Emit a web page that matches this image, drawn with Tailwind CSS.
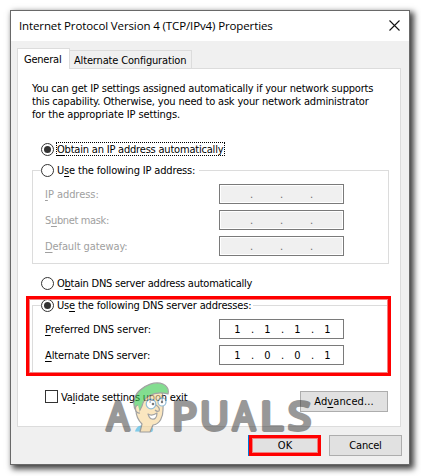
<!DOCTYPE html>
<html lang="en">
<head>
<meta charset="utf-8">
<title>Internet Protocol Version 4 (TCP/IPv4) Properties</title>
<script src="https://cdn.jsdelivr.net/npm/@tailwindcss/browser@4"></script>
</head>
<body class="bg-white w-[421px] h-[476px] overflow-hidden relative pl-[10px] pt-[10px] text-black text-[11px] leading-[13px] whitespace-nowrap font-['DejaVu_Sans_Condensed','DejaVu_Sans',sans-serif]">
<div class="w-[400px] h-[455px] border border-[#696969] bg-[#f0f0f0] flex flex-col shadow-[3px_3px_6px_1px_rgba(0,0,0,0.75)]">
  <header class="h-[30px] shrink-0 bg-white flex items-center justify-between pl-[8px] pr-[9px]">
    <h1 class="font-['Open_Sans',sans-serif] text-[11.5px] leading-[16px] tracking-[-0.12px]">Internet Protocol Version 4 (TCP/IPv4) Properties</h1>
    <svg class="w-[11px] h-[11px] mt-[-2px]" viewBox="0 0 11 11" fill="none" stroke="#111" stroke-width="1.1"><path d="M.5.5l10 10M10.500.5l-10 10"/></svg>
  </header>

  <nav class="h-[27px] shrink-0 flex items-end pl-[6px] mt-0">
    <div class="w-[53px] h-[21px] mb-[-1px] z-10 relative bg-white border border-b-0 border-[#dcdcdc] pl-[6px] pt-[4px] tracking-[-0.22px]">General</div>
    <div class="w-[122px] h-[18px] bg-[#f0f0f0] border border-l-0 border-b-0 border-[#dcdcdc] pl-[4px] pt-[3px] tracking-[-0.16px]">Alternate Configuration</div>
  </nav>

  <main class="ml-[6px] w-[384px] h-[359px] shrink-0 bg-white border border-[#dcdcdc] pl-[14px] pt-[13px]">
    <p><span class="tracking-[-0.18px]">You can get IP settings assigned automatically if your network supports</span><br><span class="tracking-[-0.17px]">this capability. Otherwise, you need to ask your network administrator</span><br><span class="tracking-[-0.11px]">for the appropriate IP settings.</span></p>

    <div class="flex mt-[22px] pl-[9px] h-[13px]">
      <span class="size-[13px] rounded-full border border-[#333] bg-white flex items-center justify-center"><i class="size-[7px] rounded-full bg-[#333]"></i></span>
      <span class="ml-[2px] -mt-px h-[14px] w-[169px] border border-dotted border-black tracking-[-0.2px] leading-[13px]"><u class="underline-offset-2">O</u>btain an IP address automatically</span>
    </div>

    <section class="mt-[14px] w-[357px] h-[94px] border border-[#dcdcdc]">
      <div class="flex w-fit ml-[8px] mt-[-7px] bg-white pr-[4px] h-[13px]">
        <span class="size-[13px] rounded-full border border-[#333] bg-white"></span>
        <span class="ml-[3px] tracking-[-0.16px]">U<u class="underline-offset-2">s</u>e the following IP address:</span>
      </div>
      <div class="mt-[7px] flex flex-col gap-[6px] pl-[12px] text-[#a0a0a0]">
        <div class="flex items-center h-[20px]"><span class="w-[174px] tracking-[-0.05px]"><u class="underline-offset-2">I</u>P address:</span>
          <div class="w-[125px] h-[20px] border border-[#7a7a7a] p-px"><div class="h-full bg-[#f0f0f0] flex pl-[29px] pt-[2px] text-[#6d6d6d]"><b class="w-[30px] font-normal">.</b><b class="w-[30px] font-normal">.</b><b class="font-normal">.</b></div></div></div>
        <div class="flex items-center h-[20px]"><span class="w-[174px] tracking-[-0.35px]">S<u class="underline-offset-2">u</u>bnet mask:</span>
          <div class="w-[125px] h-[20px] border border-[#7a7a7a] p-px"><div class="h-full bg-[#f0f0f0] flex pl-[29px] pt-[2px] text-[#6d6d6d]"><b class="w-[30px] font-normal">.</b><b class="w-[30px] font-normal">.</b><b class="font-normal">.</b></div></div></div>
        <div class="flex items-center h-[20px]"><span class="w-[174px] tracking-[-0.1px]"><u class="underline-offset-2">D</u>efault gateway:</span>
          <div class="w-[125px] h-[20px] border border-[#7a7a7a] p-px"><div class="h-full bg-[#f0f0f0] flex pl-[29px] pt-[2px] text-[#6d6d6d]"><b class="w-[30px] font-normal">.</b><b class="w-[30px] font-normal">.</b><b class="font-normal">.</b></div></div></div>
      </div>
    </section>

    <div class="flex mt-[13px] pl-[9px] h-[13px]">
      <span class="size-[13px] rounded-full border border-[#333] bg-white"></span>
      <span class="ml-[3px] tracking-[-0.24px]">O<u class="underline-offset-2">b</u>tain DNS server address automatically</span>
    </div>

    <section class="mt-[15px] w-[357px] h-[69px] border border-[#dcdcdc]">
      <div class="flex w-fit ml-[8px] mt-[-7px] bg-white pr-[2px] h-[13px]">
        <span class="size-[13px] rounded-full border border-[#333] bg-white flex items-center justify-center"><i class="size-[7px] rounded-full bg-[#333]"></i></span>
        <span class="ml-[3px] tracking-[-0.17px]">Us<u class="underline-offset-2">e</u> the following DNS server addresses:</span>
      </div>
      <div class="mt-[7px] flex flex-col gap-[6px] pl-[12px]">
        <div class="flex items-center h-[20px]"><span class="w-[174px] tracking-[-0.06px]"><u class="underline-offset-2">P</u>referred DNS server:</span>
          <div class="w-[125px] h-[20px] border border-[#7a7a7a] bg-white grid grid-cols-[repeat(7,15px)] pl-[10px] pt-[3px] text-center"><span>1</span><span>.</span><span>1</span><span>.</span><span>1</span><span>.</span><span>1</span></div></div>
        <div class="flex items-center h-[20px]"><span class="w-[174px] tracking-[-0.12px]"><u class="underline-offset-2">A</u>lternate DNS server:</span>
          <div class="w-[125px] h-[20px] border border-[#7a7a7a] bg-white grid grid-cols-[repeat(7,15px)] pl-[10px] pt-[3px] text-center"><span>1</span><span>.</span><span>0</span><span>.</span><span>0</span><span>.</span><span>1</span></div></div>
      </div>
    </section>

    <div class="flex mt-[16px] pl-[13px] items-start">
      <span class="size-[13px] border border-[#333] bg-white"></span>
      <span class="ml-[3px] mt-px w-[239px] tracking-[-0.21px]">Va<u class="underline-offset-2">l</u>idate settings upon exit</span>
      <button class="mt-px w-[88px] h-[21px] border border-[#adadad] bg-[#e1e1e1] leading-[13px] pb-px tracking-[0.1px]">Ad<u class="underline-offset-2">v</u>anced...</button>
    </div>
  </main>

  <footer class="flex mt-[8px] pl-[237px] gap-[8px]">
    <button class="w-[73px] h-[21px] border-l border-[#0078d7] bg-[#e1e1e1] leading-[13px]"><span class="flex items-center justify-center h-full border-[3px] border-[#f00] outline outline-[#f08080] -outline-offset-4">OK</span></button>
    <button class="w-[73px] h-[21px] border border-[#adadad] bg-[#e1e1e1] leading-[13px] tracking-[-0.2px]">Cancel</button>
  </footer>
</div>

<!-- highlight round the DNS group -->
<div class="absolute left-[26px] top-[296px] w-[365px] h-[80px] border-[3px] border-[#f00] outline outline-[#f08080] -outline-offset-4"></div>

<!-- Appuals watermark -->
<svg class="absolute left-[100px] top-[378px] w-[216px] h-[60px] overflow-visible" viewBox="100 378 216 60">
  <g opacity=".5" fill="#333" stroke="#333" stroke-width="3.8" stroke-linejoin="round" font-family="Open Sans, sans-serif" font-weight="400" font-size="37.500">
    <text x="107" y="429.500" textLength="22" lengthAdjust="spacingAndGlyphs">A</text>
    <text x="172" y="429.500" textLength="25" lengthAdjust="spacingAndGlyphs">P</text>
    <text x="200" y="429.500" textLength="29" lengthAdjust="spacingAndGlyphs">U</text>
    <text x="233" y="429.500" textLength="22" lengthAdjust="spacingAndGlyphs">A</text>
    <text x="260" y="429.500" textLength="23" lengthAdjust="spacingAndGlyphs">L</text>
    <text x="288" y="429.500" textLength="23" lengthAdjust="spacingAndGlyphs">S</text>
  </g>
  <g opacity=".6" stroke="#666" stroke-width="1.2" stroke-linejoin="round">
    <path d="M135 431.500c1-4 4-6 6-6l11 2c2 1 1 3 0 4.500z" fill="#38b5e6" stroke="none"/>
    <path d="M140 432l2-8c-4-4-6-8-6-14l3-14 23-4c2 6 1 12 1 18 0 7-3 14-10 15l-3 7z" fill="#f8d795"/>
    <path d="M136 411c-4-6-2-15 3-20 6-6 16-10 24-7 4 2 6 6 5 10-7-2-14-1-19 2-4 2-6 6-7 10l-3 6z" fill="#32c848"/>
    <path d="M138 405c-4 1-3 9 2 8" fill="#f8d795"/>
    <circle cx="151" cy="404" r="4.800" fill="#fff" stroke="#4a91bd"/>
    <circle cx="162" cy="402" r="4" fill="#fff" stroke="#4a91bd"/>
    <circle cx="153" cy="404" r="1.300" fill="#222" stroke="none"/>
    <circle cx="162" cy="402" r="1.200" fill="#222" stroke="none"/>
    <path d="M156 405c3 2 4 4 3 6-2 1-3 0-4-1" fill="none"/>
    <path d="M148 414c3 2 6 1 9-1 0 4-2 7-5 6-2 0-3-2-4-5z" fill="#fff"/>
  </g>
</svg>
</body>
</html>
